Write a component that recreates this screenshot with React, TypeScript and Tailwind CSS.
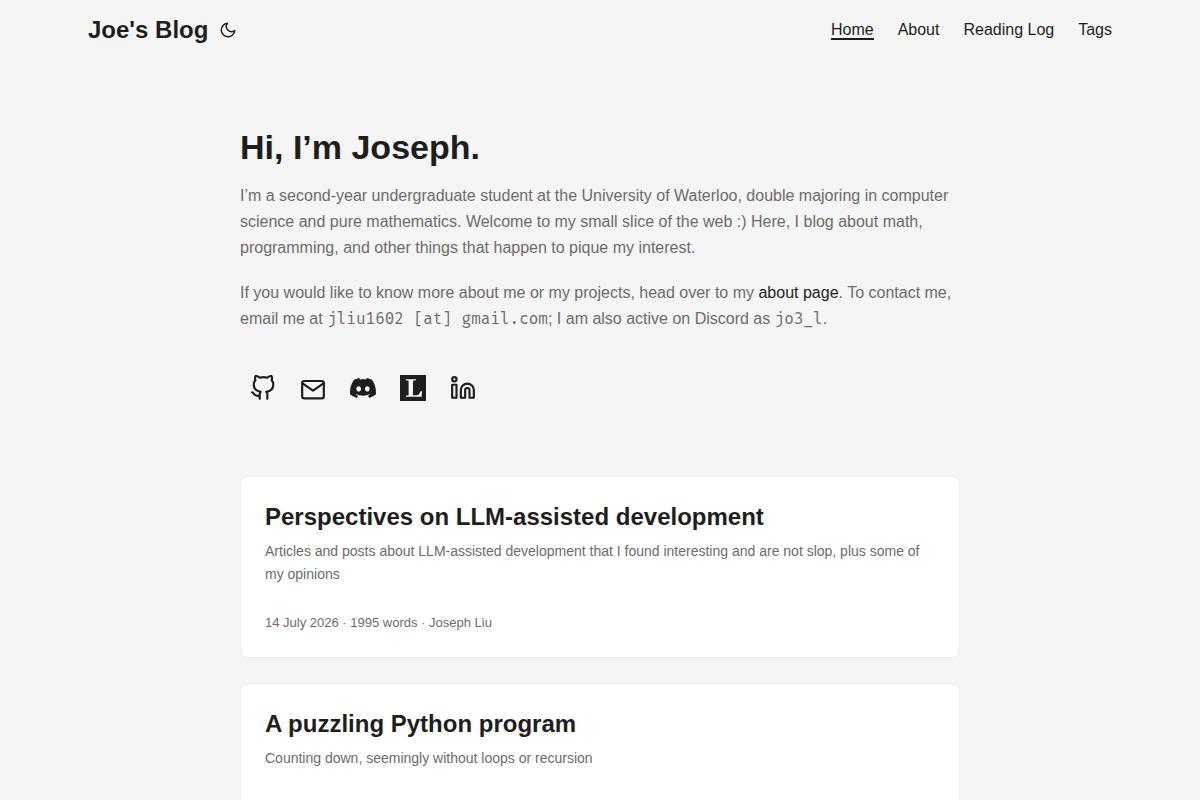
import type { ReactNode } from "react";

const navLinks = [
  { label: "Home", href: "#home", active: true },
  { label: "About", href: "#about", active: false },
  { label: "Reading Log", href: "#reading-log", active: false },
  { label: "Tags", href: "#tags", active: false },
];

const posts = [
  {
    title: "Perspectives on LLM-assisted development",
    summary:
      "Articles and posts about LLM-assisted development that I found interesting and are not slop, plus some of my opinions",
    meta: "14 July 2026 · 1995 words · Joseph Liu",
  },
  {
    title: "A puzzling Python program",
    summary: "Counting down, seemingly without loops or recursion",
    meta: "",
  },
];

function StrokeIcon({ children, viewBox = "0 0 24 24" }: { children: ReactNode; viewBox?: string }) {
  return (
    <svg
      viewBox={viewBox}
      className="size-[26px]"
      fill="none"
      stroke="currentColor"
      strokeWidth="2"
      strokeLinecap="round"
      strokeLinejoin="round"
      aria-hidden="true"
    >
      {children}
    </svg>
  );
}

const socials = [
  {
    label: "GitHub",
    icon: (
      <StrokeIcon>
        <path d="M9 19c-5 1.5-5-2.5-7-3m14 6v-3.87a3.37 3.37 0 0 0-.94-2.61c3.14-.35 6.44-1.54 6.44-7A5.44 5.44 0 0 0 20 4.77 5.07 5.07 0 0 0 19.91 1S18.73.65 16 2.48a13.38 13.38 0 0 0-7 0C6.27.65 5.09 1 5.09 1A5.07 5.07 0 0 0 5 4.77a5.44 5.44 0 0 0-1.5 3.78c0 5.42 3.3 6.61 6.44 7A3.37 3.37 0 0 0 9 18.13V22" />
      </StrokeIcon>
    ),
  },
  {
    label: "Email",
    icon: (
      <StrokeIcon viewBox="0 0 24 21">
        <path d="M4 4h16c1.1 0 2 .9 2 2v12c0 1.1-.9 2-2 2H4c-1.1 0-2-.9-2-2V6c0-1.1.9-2 2-2z" />
        <polyline points="22,6 12,13 2,6" />
      </StrokeIcon>
    ),
  },
  {
    label: "Discord",
    icon: (
      <svg viewBox="0 0 24 24" className="size-[26px]" fill="currentColor" aria-hidden="true">
        <path d="M20.317 4.3698a19.7913 19.7913 0 00-4.8851-1.5152.0741.0741 0 00-.0785.0371c-.211.3753-.4447.8648-.6083 1.2495-1.8447-.2762-3.68-.2762-5.4868 0-.1636-.3933-.4058-.8742-.6177-1.2495a.077.077 0 00-.0785-.037 19.7363 19.7363 0 00-4.8852 1.515.0699.0699 0 00-.0321.0277C.5334 9.0458-.319 13.5799.0992 18.0578a.0824.0824 0 00.0312.0561c2.0528 1.5076 4.0413 2.4228 5.9929 3.0294a.0777.0777 0 00.0842-.0276c.4616-.6304.8731-1.2952 1.226-1.9942a.076.076 0 00-.0416-.1057c-.6528-.2476-1.2743-.5495-1.8722-.8923a.077.077 0 01-.0076-.1277c.1258-.0943.2517-.1923.3718-.2914a.0743.0743 0 01.0776-.0105c3.9278 1.7933 8.18 1.7933 12.0614 0a.0739.0739 0 01.0785.0095c.1202.099.246.1981.3728.2924a.077.077 0 01-.0066.1276 12.2986 12.2986 0 01-1.873.8914.0766.0766 0 00-.0407.1067c.3604.698.7719 1.3628 1.225 1.9932a.076.076 0 00.0842.0286c1.961-.6067 3.9495-1.5219 6.0023-3.0294a.077.077 0 00.0313-.0552c.5004-5.177-.8382-9.6739-3.5485-13.6604a.061.061 0 00-.0312-.0286zM8.02 15.3312c-1.1825 0-2.1569-1.0857-2.1569-2.419 0-1.3332.9555-2.4189 2.157-2.4189 1.2108 0 2.1757 1.0952 2.1568 2.419 0 1.3332-.9555 2.4189-2.1569 2.4189zm7.9748 0c-1.1825 0-2.1569-1.0857-2.1569-2.419 0-1.3332.9554-2.4189 2.1569-2.4189 1.2108 0 2.1757 1.0952 2.1568 2.419 0 1.3332-.946 2.4189-2.1568 2.4189Z" />
      </svg>
    ),
  },
  {
    label: "Lobsters",
    icon: (
      <svg viewBox="0 0 26 26" className="size-[26px]" aria-hidden="true">
        <rect width="26" height="26" fill="currentColor" />
        <path
          fill="#f5f5f5"
          d="M5.8 4.200H16v1l-3 .6v14.400h3.600c1.500 0 2.300-.4 2.900-1.600l1-2.400H22l-.4 5.600H5.800v-1l2.800-.6V5.800l-2.800-.6z"
        />
      </svg>
    ),
  },
  {
    label: "LinkedIn",
    icon: (
      <StrokeIcon>
        <path d="M16 8a6 6 0 0 1 6 6v7h-4v-7a2 2 0 0 0-2-2 2 2 0 0 0-2 2v7h-4v-7a6 6 0 0 1 6-6z" />
        <rect x="2" y="9" width="4" height="12" />
        <circle cx="4" cy="4" r="2" />
      </StrokeIcon>
    ),
  },
];

function Code({ children }: { children: ReactNode }) {
  return <code className="font-['Fira_Mono','Liberation_Mono',monospace]">{children}</code>;
}

function SiteHeader() {
  return (
    <header className="mx-auto flex h-15 max-w-[1072px] items-center justify-between px-6">
      <div className="flex items-center">
        <a href="#home" className="text-2xl font-bold">
          Joe's Blog
        </a>
        <button type="button" aria-label="Toggle theme" className="px-[11px] py-2">
          <svg
            viewBox="0 0 24 24"
            className="size-[18px]"
            fill="none"
            stroke="currentColor"
            strokeWidth="2"
            strokeLinecap="round"
            strokeLinejoin="round"
            aria-hidden="true"
          >
            <path d="M21 12.79A9 9 0 1 1 11.21 3 7 7 0 0 0 21 12.79z" />
          </svg>
        </button>
      </div>
      <nav>
        <ul className="flex gap-6">
          {navLinks.map((link) => (
            <li key={link.label} className="flex">
              <a
                href={link.href}
                aria-current={link.active ? "page" : undefined}
                className={
                  link.active
                    ? "border-b-2 border-[#1e1e1e] pt-0.5 leading-4"
                    : "border-b-2 border-transparent pt-0.5 leading-4"
                }
              >
                {link.label}
              </a>
            </li>
          ))}
        </ul>
      </nav>
    </header>
  );
}

function Intro() {
  return (
    <section className="pt-[65px]">
      <h1 className="text-[34px] leading-11 font-bold">Hi, I’m Joseph.</h1>
      <div className="mt-[14px] flex flex-col gap-[19px] leading-[26px] text-[#6c6c6c]">
        <p>
          I’m a second-year undergraduate student at the University of Waterloo, double majoring in
          computer science and pure mathematics. Welcome to my small slice of the web :) Here, I blog
          about math, programming, and other things that happen to pique my interest.
        </p>
        <p>
          If you would like to know more about me or my projects, head over to my{" "}
          <a href="#about" className="text-[#1e1e1e]">
            about page
          </a>
          . To contact me, email me at <Code>jliu1602 [at] gmail.com</Code>; I am also active on
          Discord as <Code>jo3_l</Code>.
        </p>
      </div>
      <ul className="mt-[43px] flex gap-6 px-[10px]">
        {socials.map((social) => (
          <li key={social.label}>
            <a href="#social" aria-label={social.label} className="block">
              {social.icon}
            </a>
          </li>
        ))}
      </ul>
    </section>
  );
}

export default function App() {
  return (
    <div className="min-h-screen bg-[#f5f5f5] font-['Liberation_Sans',Arial,sans-serif] text-base text-[#1e1e1e]">
      <SiteHeader />
      <main className="mx-auto max-w-[768px] px-6 pb-6">
        <Intro />
        <div className="mt-[75px] flex flex-col gap-[25px]">
          {posts.map((post) => (
            <article key={post.title} className="rounded-lg border border-[#eeeeee] bg-white p-6">
              <h2 className="text-2xl leading-8 font-bold">{post.title}</h2>
              <p className="mt-[7px] text-sm leading-[23px] text-[#6c6c6c]">{post.summary}</p>
              <footer className="mt-[26px] min-h-[21px] text-[13px] leading-[21px] text-[#6c6c6c]">
                {post.meta}
              </footer>
            </article>
          ))}
        </div>
      </main>
    </div>
  );
}
